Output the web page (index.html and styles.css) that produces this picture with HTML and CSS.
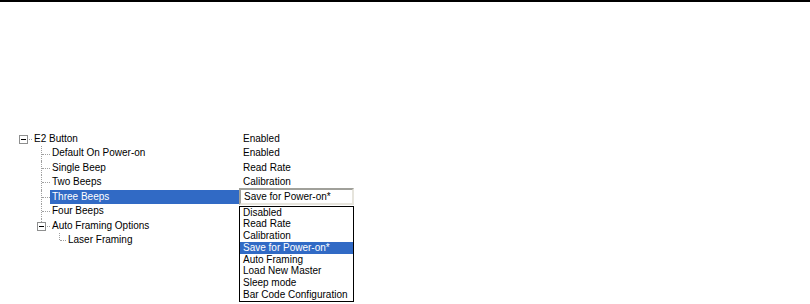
FILE: index.html
```html
<!DOCTYPE html>
<html>
<head>
<title>E2 Button settings</title>
<link rel="stylesheet" href="styles.css">
</head>
<body>

<div class="rule"></div>

<div class="tree">
    <div class="row">
        <div class="name">
            <span class="cell boxed"><span class="box"></span></span>
            <span class="label">E2 Button</span>
        </div>
        <div class="value">Enabled</div>
    </div>
    <div class="row">
        <div class="name">
            <span class="cell"></span><span class="cell tee"></span>
            <span class="label">Default On Power-on</span>
        </div>
        <div class="value">Enabled</div>
    </div>
    <div class="row">
        <div class="name">
            <span class="cell"></span><span class="cell tee"></span>
            <span class="label">Single Beep</span>
        </div>
        <div class="value">Read Rate</div>
    </div>
    <div class="row">
        <div class="name">
            <span class="cell"></span><span class="cell tee"></span>
            <span class="label">Two Beeps</span>
        </div>
        <div class="value">Calibration</div>
    </div>
    <div class="row">
        <div class="name">
            <span class="cell"></span><span class="cell tee"></span>
            <span class="label selected">Three Beeps</span>
        </div>
        <div class="value">
            <div class="combo">Save for Power-on*</div>
            <ul class="list">
                <li>Disabled</li>
                <li>Read Rate</li>
                <li>Calibration</li>
                <li class="selected">Save for Power-on*</li>
                <li>Auto Framing</li>
                <li>Load New Master</li>
                <li>Sleep mode</li>
                <li>Bar Code Configuration</li>
            </ul>
        </div>
    </div>
    <div class="row">
        <div class="name">
            <span class="cell"></span><span class="cell tee"></span>
            <span class="label">Four Beeps</span>
        </div>
        <div class="value"></div>
    </div>
    <div class="row">
        <div class="name">
            <span class="cell"></span><span class="cell boxed up"><span class="box"></span></span>
            <span class="label">Auto Framing Options</span>
        </div>
        <div class="value"></div>
    </div>
    <div class="row">
        <div class="name">
            <span class="cell"></span><span class="cell"></span><span class="cell ell"></span>
            <span class="label lv2">Laser Framing</span>
        </div>
        <div class="value"></div>
    </div>
</div>

</body>
</html>
```

FILE: styles.css
```css
html, body {
    height: 304px;
}
body {
    margin: 0;
    background-color: #fff;
    font-family: "Liberation Sans", Arial, sans-serif;
    font-size: 10px;
    color: #000;
}
.rule {
    height: 2px;
    background-color: #000;
}
.tree {
    margin-top: 130px;
}
.row {
    display: flex;
    height: 14.43px;
}
.name {
    width: 239px;
    padding-left: 14px;
    box-sizing: border-box;
    display: flex;
    flex: none;
}
.label {
    flex: 1;
    padding-left: 2px;
    line-height: 14.43px;
    white-space: nowrap;
}
.label.lv2 {
    margin-left: -2px;
}
.label.selected {
    background-color: #316ac5;
    color: #fff;
}
.value {
    position: relative;
    flex: 1;
    padding-left: 4px;
    line-height: 14.43px;
    white-space: nowrap;
}

/* tree guide lines */
.cell {
    position: relative;
    width: 18px;
    flex: none;
}
.tee::before, .ell::before, .up::before {
    content: "";
    position: absolute;
    left: 9px;
    top: 0;
    border-left: 1px dotted #a0a0a0;
}
.tee::before {
    bottom: 0;
}
.ell::before {
    height: 50%;
}
.up::before {
    height: calc(50% - 4px);
}
.tee::after, .ell::after, .boxed::after {
    content: "";
    position: absolute;
    left: 10px;
    right: 0;
    top: 50%;
    border-top: 1px dotted #a0a0a0;
}
.ell::after {
    right: 2px;
}
.boxed::after {
    left: 15px;
}
.box {
    position: absolute;
    left: 5px;
    top: 50%;
    margin-top: -4px;
    width: 9px;
    height: 9px;
    box-sizing: border-box;
    border: 1px solid #8e8f8f;
    background-color: #fff;
}
.box::after {
    content: "";
    position: absolute;
    left: 1px;
    top: 3px;
    width: 5px;
    height: 1px;
    background-color: #000;
}

/* in-place editor */
.combo {
    position: absolute;
    left: 0;
    top: -2px;
    width: 115px;
    height: 17px;
    box-sizing: border-box;
    border: 2px solid;
    border-color: #a0a09a #e6e4dc #e6e4dc #a0a09a;
    background-color: #fff;
    padding-left: 3px;
    line-height: 13px;
}
.list {
    position: absolute;
    z-index: 1;
    left: 0;
    top: 16px;
    width: 115px;
    margin: 0;
    padding: 0;
    list-style: none;
    box-sizing: border-box;
    border: 1px solid #000;
    background-color: #fff;
}
.list li {
    height: 11.75px;
    line-height: 11.75px;
    padding-left: 3px;
}
.list li.selected {
    background-color: #316ac5;
    color: #fff;
}
```
